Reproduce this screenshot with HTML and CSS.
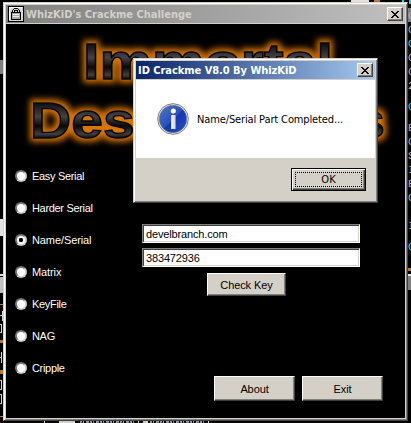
FILE: index.html
```html
<!DOCTYPE html>
<html lang="en">
<head>
<meta charset="utf-8">
<title>WhizKiD's Crackme Challenge</title>
<link rel="stylesheet" href="styles.css">
</head>
<body>
<svg class="desktop" width="411" height="423" shape-rendering="crispEdges">
  <path fill="#808080" d="M0 60h3v14H0zM408 8h3v14h-3zM408 276h3v14h-3z"/>
  <path fill="#c0c0c0" d="M0 277h3v16H0z"/>
  <path fill="#e4e2de" d="M0 219h3v17H0zM0 274h3v2H0zM351 0h18v2h-18zM408 274h3v2h-3z"/>
  <path fill="#d4d0c8" d="M59 421h16v2H59zM143 421h5v2h-5zM138 421h1v2h-1zM208 421h1v2h-1zM44 421h1v2h-1zM2 311h1v10H2zM0 315h2v1H0zM0 324h2v1H0zM1 325h1v7H1zM0 332h2v1H0zM1 352h1v11H1zM0 357h1v1H0zM0 380h2v1H0zM1 381h1v8H1zM0 389h2v1H0zM0 394h2v1H0zM1 395h1v8H1zM0 403h2v1H0z"/>
  <path fill="#b87838" d="M0 304h3v1H0zM0 340h3v3H0zM0 370h3v4H0zM0 416h3v1H0zM374 0h6v2h-6zM408 268h3v3h-3z"/>
  <path stroke="#8c9098" stroke-width="2" stroke-dasharray="2 1 1 2 3 1" d="M80 422h54M150 422h54"/>
  <path fill="#00e0e0" d="M402 0h2v2h-2zM409 0h2v4h-2z"/>
  <g class="listing">
    <text x="408" y="19">C</text><text x="408" y="33">C</text><text class="hot" x="408" y="47">C</text><text x="408" y="61">C</text><text x="408" y="75">C</text><text x="408" y="89">2</text>
    <text class="hot" x="408" y="110">C</text><text x="408" y="131">E</text><text x="408" y="145">C</text><text x="408" y="159">S</text><text x="408" y="173">I</text><text x="408" y="187">E</text><text x="408" y="201">G</text><text x="408" y="229">I</text><text class="hot" x="408" y="250">C</text>
  </g>
</svg>
<main class="window">
  <header class="titlebar">
    <svg class="lock" width="16" height="16" viewBox="0 0 16 16" shape-rendering="crispEdges">
      <path fill="#000" d="M0 0h16v16H0z"/><path fill="#d8d8d8" d="M1 1h14v14H1z"/>
      <path fill="#fff" d="M1 1h13v1H2v12H1z"/>
      <path fill="none" stroke="#000" d="M4.500 7V4.500l2-2h3l2 2V7M6.500 6V4.500h3V6M3.500 6.500h9v7h-9z"/>
      <path fill="#aaa" d="M4 7h8v6H4z"/><path fill="#eee" d="M5 8h6v1H5zM5 10h6v1H5z"/>
    </svg>
    <h1 class="caption">WhizKiD's Crackme Challenge</h1>
    <button class="close" aria-label="Close"><svg width="8" height="7" shape-rendering="crispEdges"><path d="M0 0h2v1h1v1h2V1h1V0h2v1H7v1H6v1H5v1h1v1h1v1h1v1H6V6H5V5H3v1H2v1H0V6h1V5h1V4h1V3H2V2H1V1H0z"/></svg></button>
  </header>
  <section class="client">
    <svg class="logo" width="399" height="136" viewBox="6 24 399 136">
      <defs>
        <filter id="glow" x="-10%" y="-20%" width="120%" height="140%" color-interpolation-filters="sRGB">
          <feMorphology in="SourceAlpha" operator="dilate" radius="2.5"/><feGaussianBlur stdDeviation="3.2" result="halo"/>
          <feFlood flood-color="#d87400"/><feComposite in2="halo" operator="in" result="orange"/>
          <feMerge><feMergeNode in="orange"/><feMergeNode in="SourceGraphic"/></feMerge>
        </filter>
        <linearGradient id="metal" x2="0" y2="1">
          <stop offset=".2" stop-color="#111"/><stop offset=".43" stop-color="#444"/><stop offset=".6" stop-color="#080808"/><stop offset=".74" stop-color="#404040"/><stop offset=".82" stop-color="#050505"/>
        </linearGradient>
      </defs>
      <g filter="url(#glow)">
        <text x="83" y="78.500" textLength="250" lengthAdjust="spacingAndGlyphs">Immortal</text>
        <text x="30" y="137.500" textLength="355" lengthAdjust="spacingAndGlyphs">Descendants</text>
      </g>
    </svg>
    <div class="panel">
      <ul class="options">
        <li><i class="radio"></i><span class="tight">Easy Serial</span></li>
        <li><i class="radio"></i><span class="tight">Harder Serial</span></li>
        <li><i class="radio on"></i><span class="snug">Name/Serial</span></li>
        <li><i class="radio"></i><span class="snug">Matrix</span></li>
        <li><i class="radio"></i><span class="tight">KeyFile</span></li>
        <li><i class="radio"></i><span class="tight">NAG</span></li>
        <li><i class="radio"></i><span class="tight">Cripple</span></li>
      </ul>
      <div class="form">
        <div class="field">develbranch.com</div>
        <div class="field">383472936</div>
        <button class="btn check">Check Key</button>
        <div class="actions"><button class="btn">About</button><button class="btn">Exit</button></div>
      </div>
    </div>
  </section>
</main>
<section class="dialog" role="dialog">
  <header class="titlebar active">
    <h2 class="caption">ID Crackme V8.0 By WhizKiD</h2>
    <button class="close" aria-label="Close"><svg width="8" height="7" shape-rendering="crispEdges"><path d="M0 0h2v1h1v1h2V1h1V0h2v1H7v1H6v1H5v1h1v1h1v1h1v1H6V6H5V5H3v1H2v1H0V6h1V5h1V4h1V3H2V2H1V1H0z"/></svg></button>
  </header>
  <div class="message">
    <svg width="32" height="32" viewBox="0 0 32 32">
      <defs><linearGradient id="blue" x2="1" y2="1"><stop stop-color="#4f78d0"/><stop offset=".5" stop-color="#2850bd"/><stop offset=".52" stop-color="#1238ad"/><stop offset="1" stop-color="#2452d0"/></linearGradient>
      <linearGradient id="stem" x2="1"><stop stop-color="#fff"/><stop offset="1" stop-color="#ccc"/></linearGradient></defs>
      <circle cx="16" cy="16" r="15.3" fill="#f2f2f2" stroke="#777"/>
      <circle cx="16" cy="16" r="13.7" fill="url(#blue)" stroke="#6a7080" stroke-width=".6"/>
      <circle cx="16.3" cy="8" r="2.5" fill="#fff"/><rect x="14.2" y="12" width="4.4" height="14" rx=".6" fill="url(#stem)"/>
    </svg>
    <p>Name/Serial Part Completed...</p>
  </div>
  <footer><button class="ok"><span>OK</span></button></footer>
</section>
</body>
</html>
```
FILE: styles.css
```css
* { box-sizing: border-box; }
body { margin: 0; width: 411px; height: 423px; overflow: hidden; background: #000; position: relative; }
h1, h2, p, ul { margin: 0; padding: 0; }
button { padding: 0; border: 0; border-radius: 0; color: #000; }
.desktop { position: absolute; left: 0; top: 0; }
.listing { font: 11px "Liberation Mono", monospace; fill: #b0b0b0; }
.hot { fill: #00e0e0; }
.window { position: absolute; left: 3px; top: 2px; width: 405px; height: 419px; padding: 1px; background: #d4d0c8; border: 1px solid; border-color: #d4d0c8 #404040 #404040 #d4d0c8; box-shadow: inset 1px 1px #fff, inset -1px -1px #808080; font: 11px "Liberation Sans", sans-serif; }
.window > .titlebar { margin: 1px 1px 0; }
.titlebar { display: flex; align-items: center; height: 18px; padding: 0 2px; background: linear-gradient(90deg, #808080, #c0c0c0); }
.titlebar.active { background: linear-gradient(90deg, #0a246a, #a6caf0); }
.lock { margin-right: 2px; }
.caption { flex: 1; font: bold 11px "DejaVu Sans Condensed", sans-serif; color: #d4d0c8; white-space: nowrap; }
.active .caption { color: #fff; letter-spacing: -.04px; }
.close { display: flex; align-items: center; justify-content: center; width: 16px; height: 14px; background: #d4d0c8; border: 1px solid; border-color: #fff #404040 #404040 #fff; box-shadow: inset -1px -1px #808080; }
.client { display: flex; flex-direction: column; margin: 1px 1px 0; height: 394px; background: #000; }
.logo { display: block; }
.logo text { font: bold 50px "Liberation Sans", sans-serif; fill: url(#metal); stroke: #080808; stroke-width: 1.4px; }
.panel { display: flex; }
.options { width: 136px; padding-left: 9px; list-style: none; color: #fff; }
.options li { display: flex; align-items: center; gap: 5px; height: 32px; }
.tight { letter-spacing: -.32px; }
.snug { letter-spacing: -.1px; }
.radio { width: 12px; height: 12px; border-radius: 50%; background: #fff; border: 2px solid; border-color: #777 #d4d0c8 #d4d0c8 #777; }
.on { background: radial-gradient(circle, #000 0 2px, #fff 2.3px); }
.form { width: 243px; padding-top: 64px; }
.field { width: 218px; height: 19px; margin-bottom: 5px; padding-left: 3px; border: 1px solid; border-color: #808080 #fff #fff #808080; background: #fff; box-shadow: inset 1px 1px #404040, inset -1px -1px #d4d0c8; line-height: 19px; letter-spacing: -.15px; }
.btn { display: block; width: 81px; height: 25px; font: 11px "Liberation Sans", sans-serif; letter-spacing: -.1px; background: #d4d0c8; border: 1px solid; border-color: #fff #404040 #404040 #fff; box-shadow: inset -1px -1px #808080; }
.check { width: 79px; height: 23px; margin: 6px 0 0 65px; }
.actions { display: flex; gap: 7px; margin: 80px 0 0 72px; }
.dialog { position: absolute; left: 133px; top: 58px; width: 245px; height: 145px; padding: 2px; background: #d4d0c8; border: 1px solid; border-color: #d4d0c8 #404040 #404040 #d4d0c8; box-shadow: inset 1px 1px #fff, inset -1px -1px #808080; }
.message { display: flex; gap: 8px; height: 78px; margin-top: 1px; padding: 23px 0 0 21px; background: #fff; font: 11px/34px "DejaVu Sans Condensed", sans-serif; letter-spacing: -.13px; }
footer { display: flex; justify-content: flex-end; padding: 10px 9px 0; }
.ok { display: flex; width: 75px; height: 23px; padding: 2px; background: #d4d0c8; border: 1px solid #000; box-shadow: inset 1px 1px #fff, inset -1px -1px #404040, inset -2px -2px #808080; font: 11px "DejaVu Sans Condensed", sans-serif; }
.ok span { flex: 1; margin: 1px; border: 1px dotted #000; line-height: 13px; }
```
